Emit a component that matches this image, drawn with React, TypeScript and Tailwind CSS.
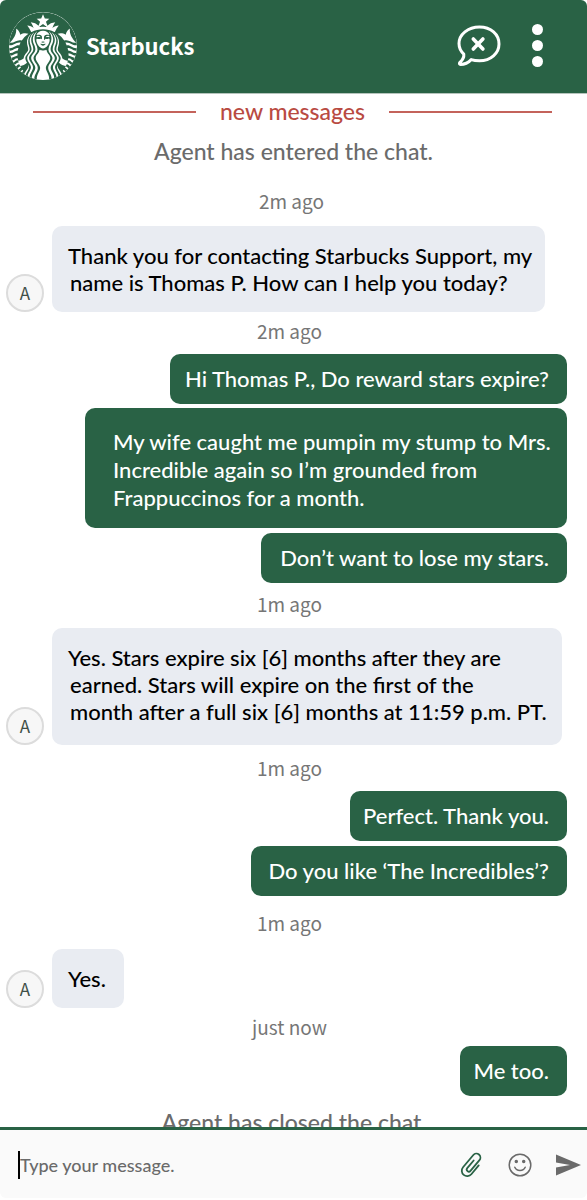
import { useState } from 'react';
import { SiStarbucks } from 'react-icons/si';

type ChatItem =
  | { kind: 'time'; text: string; box: string }
  | { kind: 'agent' | 'user'; text: string; box: string };

const thread: ChatItem[] = [
  { kind: 'time', text: '2m ago', box: 'h-[50px] pl-1' },
  {
    kind: 'agent',
    text: 'Thank you for contacting Starbucks Support, my\nname is Thomas P. How can I help you today?',
    box: 'w-[493px] py-4',
  },
  { kind: 'time', text: '2m ago', box: 'h-[42px] pb-1' },
  { kind: 'user', text: 'Hi Thomas P., Do reward stars expire?', box: 'w-[397px] py-[11px] pr-[18px] text-right' },
  {
    kind: 'user',
    text: 'My wife caught me pumpin my stump to Mrs.\nIncredible again so I’m grounded from\nFrappuccinos for a month.',
    box: 'mt-1 w-[482px] pt-5 pr-2 pb-4 pl-7',
  },
  { kind: 'user', text: 'Don’t want to lose my stars.', box: 'mt-[5px] w-[306px] py-[11px] pr-[18px] text-right' },
  { kind: 'time', text: '1m ago', box: 'h-[45px] pb-1' },
  {
    kind: 'agent',
    text: 'Yes. Stars expire six [6] months after they are\nearned. Stars will expire on the first of the\nmonth after a full six [6] months at 11:59 p.m. PT.',
    box: 'w-[510px] pt-4 pb-5',
  },
  { kind: 'time', text: '1m ago', box: 'h-[46px]' },
  { kind: 'user', text: 'Perfect. Thank you.', box: 'w-[217px] py-[11px] pr-[18px] text-right' },
  { kind: 'user', text: 'Do you like ‘The Incredibles’?', box: 'mt-[5px] w-[316px] py-[11px] pr-[18px] text-right' },
  { kind: 'time', text: '1m ago', box: 'h-[53px]' },
  { kind: 'agent', text: 'Yes.', box: 'w-[72px] py-4' },
  { kind: 'time', text: 'just now', box: 'h-[38px]' },
  { kind: 'user', text: 'Me too.', box: 'w-[107px] py-[11px] pr-[18px] text-right' },
];

function CloseChatIcon() {
  return (
    <svg viewBox="0 0 44 42" className="h-[42px] w-11" fill="none" stroke="currentColor" strokeLinecap="round" strokeLinejoin="round">
      <path
        strokeWidth="3"
        d="M22.5 2C11 2 2 9.400 2 18.500c0 4.600 1.800 7.800 4.800 10.600.5 3.700-1.300 6-4.100 8.600-.6.800-.2 1.700.8 1.700 4.200 0 7.700-1.600 10.700-4.800 2.500.8 5.300 1.100 8.300 1.100C33.800 35.700 42 28.200 42 18.900S34 2 22.500 2Z"
      />
      <path strokeWidth="3.600" d="m16.300 14 9.600 10m0-10-9.600 10" />
    </svg>
  );
}

function ClipIcon() {
  return (
    <svg viewBox="0 0 24 26" className="h-[26px] w-6 overflow-visible" fill="none" stroke="currentColor" strokeWidth="1.800" strokeLinecap="round">
      <path
        transform="rotate(40 12 13)"
        d="M17.400 9V20.500a5.400 5.400 0 0 1-10.800 0V4.500a4 4 0 0 1 8 0V18.500a1.500 1.500 0 0 1-4.200 0V8.500"
      />
    </svg>
  );
}

function SmileIcon() {
  return (
    <svg viewBox="0 0 24 24" className="size-6" fill="none" stroke="currentColor" strokeWidth="1.500" strokeLinecap="round">
      <circle cx="12" cy="12" r="10.800" />
      <path d="M6.800 14.300c1.800 4.300 8.600 4.300 10.400 0" />
      <circle cx="8.300" cy="8.500" r="1" fill="currentColor" />
      <circle cx="15.700" cy="8.500" r="1" fill="currentColor" />
    </svg>
  );
}

function SendIcon() {
  return (
    <svg viewBox="0 0 25 22" className="h-[22px] w-[25px]" fill="currentColor">
      <path d="M0 .5 25 11 0 21.500v-8L14 11 0 8.500Z" />
    </svg>
  );
}

function Message({ item }: { item: ChatItem }) {
  if (item.kind === 'time') {
    return (
      <p className={`flex items-center justify-center pr-2 font-['Noto_Sans_CJK_SC',sans-serif] text-[19px] leading-6 font-normal text-[#767676] ${item.box}`}>
        {item.text}
      </p>
    );
  }

  if (item.kind === 'user') {
    return (
      <div className={`mr-5 ml-auto max-w-full rounded-[10px] bg-[#296245] text-[22px] leading-7 whitespace-pre-line text-white ${item.box}`}>
        {item.text}
      </div>
    );
  }

  return (
    <div className="flex items-end gap-2 pr-5 pl-1.5">
      <span className="flex size-[38px] shrink-0 items-center justify-center rounded-full border-2 border-[#dcdcdc] bg-[#f7f7f7] font-['Noto_Sans_CJK_SC',sans-serif] text-[17px] font-normal text-[#3f4f48]">
        A
      </span>
      <div className={`rounded-[10px] bg-[#e9ecf2] pl-[18px] -indent-0.5 text-[22px] leading-[27px] whitespace-pre-line text-black ${item.box}`}>
        {item.text}
      </div>
    </div>
  );
}

export default function App() {
  const [draft, setDraft] = useState('');

  return (
    <div className="flex h-screen flex-col overflow-hidden bg-white font-[Lato,sans-serif] font-medium">
      <header className="flex h-[94px] shrink-0 items-center rounded-t-md border-b border-[#b5c4bc] bg-[#296245] pr-7 pb-0.5 pl-[9px] text-white">
        {/* the glyph fills the green parts, the siren shows through in white */}
        <SiStarbucks className="size-[68px] rounded-full bg-white text-[#296245]" />
        <h1 className="ml-[9px] font-['Noto_Sans_CJK_SC',sans-serif] text-[22px] font-bold">Starbucks</h1>
        <button type="button" aria-label="End chat" className="ml-auto">
          <CloseChatIcon />
        </button>
        <button type="button" aria-label="More options" className="ml-3.5 flex w-11 flex-col items-center gap-[5px]">
          <span className="size-[11px] rounded-full bg-white" />
          <span className="size-[11px] rounded-full bg-white" />
          <span className="size-[11px] rounded-full bg-white" />
        </button>
      </header>

      <main className="min-h-0 flex-1 overflow-hidden">
        <div className="flex h-9 items-center gap-6 pr-[35px] pl-[33px] text-[23px] text-[#b94a42]">
          <span className="h-0.5 flex-1 bg-[#c4635b]" />
          <span className="pb-0.5">new messages</span>
          <span className="h-0.5 flex-1 bg-[#c4635b]" />
        </div>
        <p className="flex h-[46px] items-center justify-center pb-1 text-[23px] text-[#6b6b6b]">Agent has entered the chat.</p>
        {thread.map((item, i) => (
          <Message key={i} item={item} />
        ))}
        <p className="mt-2.5 pr-1 text-center text-[23px] leading-8 text-[#6b6b6b]">Agent has closed the chat</p>
      </main>

      <form
        className="mb-0.5 flex h-[71px] shrink-0 items-center rounded-b-md border-t-3 border-[#296245] bg-[#fafafa] pt-0.5 pr-1.5 pl-[18px] text-[#6a6a6a]"
        onSubmit={(e) => {
          e.preventDefault();
          setDraft('');
        }}
      >
        <input
          type="text"
          aria-label="Message"
          placeholder="Type your message."
          value={draft}
          onChange={(e) => setDraft(e.target.value)}
          className="h-7 min-w-0 flex-1 border-l-2 border-black text-lg outline-none placeholder:text-[#6a6a6a]"
        />
        <button type="button" aria-label="Attach a file" className="text-[#296245]">
          <ClipIcon />
        </button>
        <button type="button" aria-label="Insert emoji" className="ml-6">
          <SmileIcon />
        </button>
        <button type="submit" aria-label="Send" className="ml-6">
          <SendIcon />
        </button>
      </form>
    </div>
  );
}
